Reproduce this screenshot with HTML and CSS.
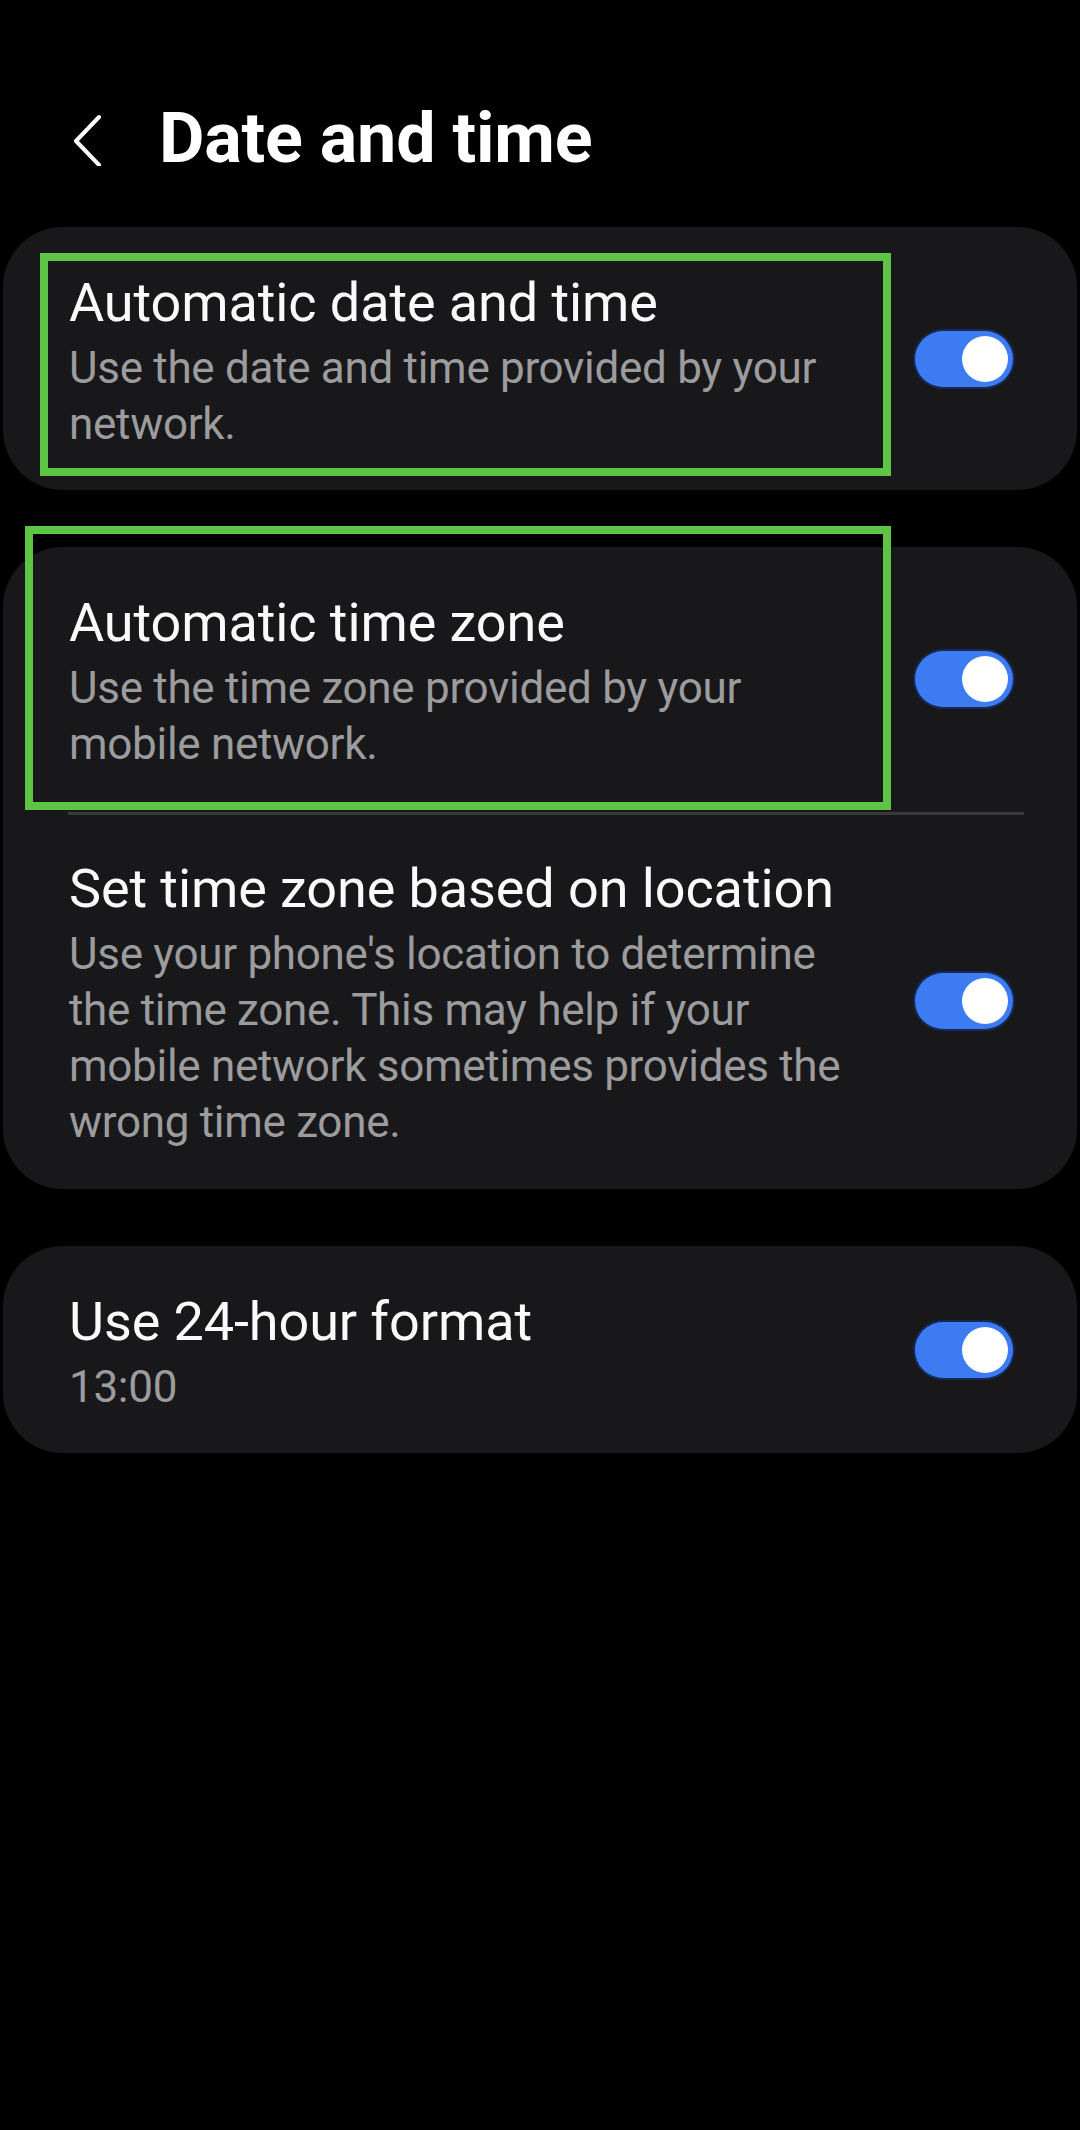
FILE: index.html
```html
<!DOCTYPE html>
<html lang="en">
<head>
<meta charset="utf-8">
<title>Date and time</title>
<link rel="stylesheet" href="styles.css">
</head>
<body>
<div class="screen">
  <header class="header">
    <svg class="back" width="32" height="56" viewBox="0 0 32 56" aria-hidden="true">
      <polyline points="26,7 3,31 26,55" fill="none" stroke="#ffffff" stroke-width="4" stroke-linecap="round" stroke-linejoin="round"/>
    </svg>
    <h1 class="title">Date and time</h1>
  </header>

  <section class="card">
    <div class="row">
      <div class="text">
        <div class="row-title">Automatic date and time</div>
        <div class="row-sub">Use the date and time provided by your network.</div>
      </div>
      <div class="toggle"><span class="knob"></span></div>
    </div>
    <div class="highlight hl-1"></div>
  </section>

  <section class="card">
    <div class="row row-mid">
      <div class="text">
        <div class="row-title">Automatic time zone</div>
        <div class="row-sub">Use the time zone provided by your mobile network.</div>
      </div>
      <div class="toggle"><span class="knob"></span></div>
    </div>
    <div class="divider"></div>
    <div class="row row-after">
      <div class="text">
        <div class="row-title">Set time zone based on location</div>
        <div class="row-sub">Use your phone's location to determine the time zone. This may help if your mobile network sometimes provides the wrong time zone.</div>
      </div>
      <div class="toggle"><span class="knob"></span></div>
    </div>
    <div class="highlight hl-2"></div>
  </section>

  <section class="card">
    <div class="row">
      <div class="text">
        <div class="row-title">Use 24-hour format</div>
        <div class="row-sub">13:00</div>
      </div>
      <div class="toggle"><span class="knob"></span></div>
    </div>
  </section>
</div>
</body>
</html>
```

FILE: styles.css
```css
html, body {
  margin: 0;
  padding: 0;
  background: #000000;
}

body {
  width: 1080px;
  height: 2130px;
  font-family: Roboto, "Noto Sans", "Liberation Sans", sans-serif;
  color: #fafafa;
  overflow: hidden;
}

.screen {
  display: flex;
  flex-direction: column;
}

.header {
  display: flex;
  align-items: center;
  height: 82px;
  margin-top: 97px;
  padding-left: 73px;
}

.back {
  display: block;
  flex: none;
}

.title {
  margin: 0 0 0 54px;
  font-size: 70px;
  line-height: 82px;
  font-weight: 700;
  letter-spacing: -0.2px;
  color: #ffffff;
}

.card {
  position: relative;
  margin: 48px 3px 0;
  background: #18181a;
  border-radius: 60px;
}

.card + .card {
  margin-top: 57px;
}

.row {
  display: flex;
  align-items: center;
  padding: 46px 64px 38px 66px;
}

.row-mid {
  padding-bottom: 40px;
}

.row-after {
  padding-top: 44px;
  padding-bottom: 39px;
}

.text {
  flex: 1;
  min-width: 0;
  max-width: 790px;
  margin-right: auto;
}

.row-title {
  font-size: 54px;
  line-height: 60px;
  font-weight: 400;
  color: #fafafa;
  letter-spacing: -0.1px;
}

.row-sub {
  margin-top: 7px;
  font-size: 44px;
  line-height: 56px;
  color: #9c9c9e;
  letter-spacing: -0.3px;
}

.divider {
  height: 3px;
  margin: 0 53px 0 65px;
  background: #3a3a3c;
}

.toggle {
  position: relative;
  flex: none;
  width: 98px;
  height: 56px;
  margin-left: 24px;
  margin-bottom: 8px;
  box-sizing: border-box;
  border-radius: 28px;
  background: #3d7bf3;
  box-shadow: 0 0 0 2px rgba(22, 56, 140, 0.55);
}

.knob {
  position: absolute;
  top: 5px;
  right: 5px;
  width: 46px;
  height: 46px;
  border-radius: 50%;
  background: #ffffff;
}

.highlight {
  position: absolute;
  border: 8px solid #5dc445;
  box-sizing: border-box;
  pointer-events: none;
}

.hl-1 {
  left: 37px;
  top: 26px;
  width: 851px;
  height: 223px;
}

.hl-2 {
  left: 22px;
  top: -21px;
  width: 866px;
  height: 284px;
}
```
